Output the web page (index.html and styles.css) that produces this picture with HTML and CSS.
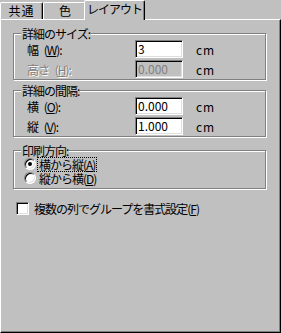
FILE: index.html
```html
<!DOCTYPE html>
<html lang="ja">
<head>
    <meta charset="UTF-8">
    <title>レイアウト</title>
    <link rel="stylesheet" href="styles.css">
</head>
<body>
    <div class="tabs">
        <div class="tab tab-first">共通</div>
        <div class="tab tab-second">色</div>
        <div class="tab active">レイアウト</div>
    </div>
    <div class="panel">
        <div class="group">
            <div class="group-title">詳細のサイズ:</div>
            <div class="rows">
                <div class="row">
                    <span class="label">幅 (<u>W</u>):</span>
                    <span class="field">3</span>
                    <span class="unit">cm</span>
                </div>
                <div class="row">
                    <span class="label disabled">高さ (<u>H</u>):</span>
                    <span class="field off">0.000</span>
                    <span class="unit">cm</span>
                </div>
            </div>
        </div>
        <div class="group spacing">
            <div class="group-title">詳細の間隔:</div>
            <div class="rows">
                <div class="row">
                    <span class="label">横 (<u>O</u>):</span>
                    <span class="field">0.000</span>
                    <span class="unit">cm</span>
                </div>
                <div class="row">
                    <span class="label">縦 (<u>V</u>):</span>
                    <span class="field">1.000</span>
                    <span class="unit">cm</span>
                </div>
            </div>
        </div>
        <div class="group order">
            <div class="group-title">印刷方向:</div>
            <div class="options">
                <div class="option">
                    <span class="radio checked"></span>
                    <span class="option-text focus">横から縦(<u>A</u>)</span>
                </div>
                <div class="option">
                    <span class="radio"></span>
                    <span class="option-text">縦から横(<u>D</u>)</span>
                </div>
            </div>
        </div>
        <div class="check-row">
            <span class="checkbox"></span>
            <span class="check-text">複数の列でグループを書式設定(<u>F</u>)</span>
        </div>
    </div>
</body>
</html>
```

FILE: styles.css
```css
* {
    box-sizing: border-box;
    margin: 0;
    padding: 0;
}

body {
    width: 281px;
    height: 333px;
    overflow: hidden;
    background: #c0c0c0;
    font-family: "Noto Sans CJK JP", "Noto Sans", sans-serif;
    font-size: 12px;
    letter-spacing: -1px;
    color: #000;
}

u {
    text-decoration: underline;
    text-underline-offset: 1px;
}

/* tab strip */
.tabs {
    display: flex;
    align-items: flex-end;
    height: 19px;
}

.tab {
    height: 17px;
    border-top: 1px solid #fff;
    border-left: 1px solid #fff;
    border-right: 1px solid #000;
    box-shadow: inset -1px 0 #808080;
    border-radius: 2px 2px 0 0;
    background: #c0c0c0;
    text-align: center;
    line-height: 16px;
    white-space: nowrap;
}

.tab-first {
    width: 43px;
    letter-spacing: 1px;
}

.tab-second {
    width: 43px;
}

.tab.active {
    position: relative;
    z-index: 1;
    width: 61px;
    height: 20px;
    margin-left: -2px;
    margin-bottom: -1px;
    line-height: 15px;
}

/* page */
.panel {
    height: 314px;
    border-top: 1px solid #fff;
    border-left: 1px solid #fff;
    border-right: 1px solid #000;
    border-bottom: 1px solid #000;
    box-shadow: inset -1px -1px #808080;
    padding: 13px 0 0 12px;
}

.group {
    width: 253px;
    border: 1px solid #808080;
    box-shadow: inset 1px 1px #fff, 1px 1px #fff;
    padding-bottom: 1px;
}

.group.spacing {
    margin-top: 10px;
}

.group.order {
    margin-top: 13px;
    padding-bottom: 3px;
}

.group-title {
    width: fit-content;
    height: 13px;
    line-height: 13px;
    margin: -7px 0 0 7px;
    padding: 0 1px;
    background: #c0c0c0;
    white-space: nowrap;
}

.rows {
    padding-left: 13px;
}

.row {
    display: flex;
    align-items: center;
    height: 18px;
}

.row + .row {
    margin-top: 2px;
}

.label {
    width: 108px;
    word-spacing: 4px;
}

.disabled {
    color: #808080;
    text-shadow: 1px 1px #fff;
}

.field {
    width: 48px;
    height: 18px;
    border: 1px solid;
    border-color: #808080 #fff #fff #808080;
    box-shadow: inset 1px 1px #000, inset -1px -1px #dfdfdf;
    background: #fff;
    padding-left: 2px;
    line-height: 16px;
    letter-spacing: 0;
}

.field.off {
    background: #c0c0c0;
    color: #808080;
}

.unit {
    margin-left: 13px;
    letter-spacing: 1px;
}

/* radio buttons */
.options {
    padding-left: 10px;
}

.option {
    display: flex;
    align-items: center;
    height: 14px;
}

.radio {
    display: flex;
    align-items: center;
    justify-content: center;
    width: 12px;
    height: 12px;
    border-radius: 50%;
    border: 1px solid;
    border-color: #808080 #fff #fff #808080;
    box-shadow: inset 1px 1px #000, inset -1px -1px #dfdfdf;
    background: #fff;
}

.radio.checked::after {
    content: "";
    width: 4px;
    height: 4px;
    border-radius: 50%;
    background: #000;
}

.option-text {
    margin-left: 2px;
    padding: 1px 1px 0;
    line-height: 12px;
}

.focus {
    outline: 1px dotted #000;
}

/* checkbox */
.check-row {
    display: flex;
    align-items: center;
    margin: 13px 0 0 3px;
    height: 13px;
}

.checkbox {
    width: 13px;
    height: 13px;
    border: 1px solid;
    border-color: #808080 #fff #fff #808080;
    box-shadow: inset 1px 1px #000, inset -1px -1px #dfdfdf;
    background: #fff;
}

.check-text {
    margin-left: 5px;
}
```
